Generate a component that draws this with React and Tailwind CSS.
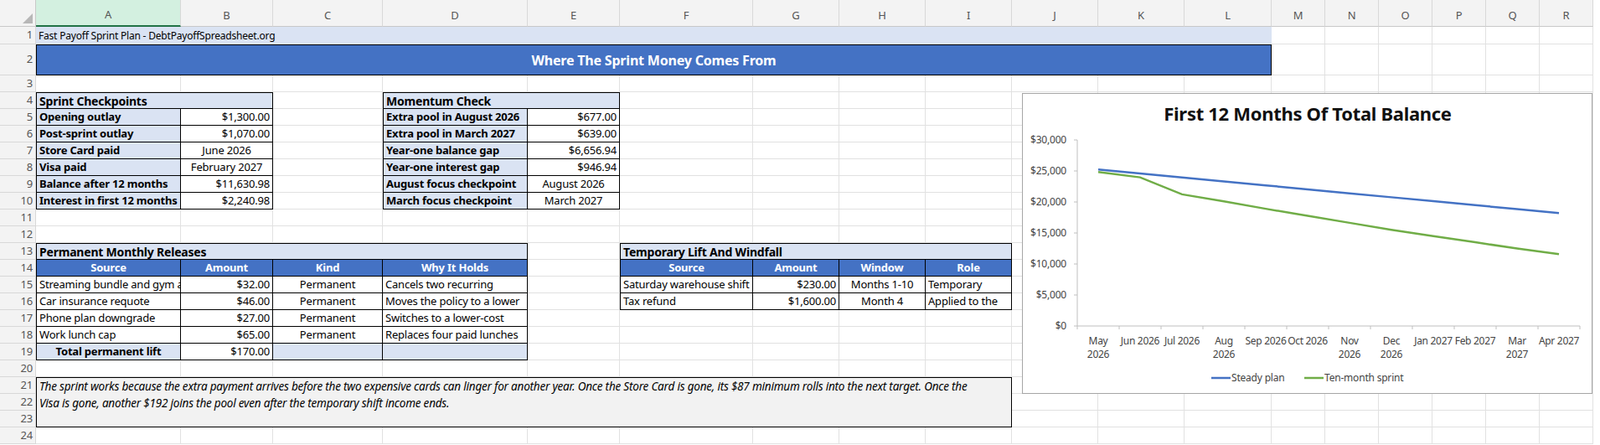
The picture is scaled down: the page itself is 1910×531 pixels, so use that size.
import React from 'react';

const COLS = ['A','B','C','D','E','F','G','H','I','J','K','L','M','N','O','P','Q','R'];
const COLSTART = ['', 'col-start-1','col-start-2','col-start-3','col-start-4','col-start-5','col-start-6','col-start-7','col-start-8','col-start-9','col-start-10','col-start-11','col-start-12','col-start-13','col-start-14','col-start-15','col-start-16','col-start-17','col-start-18','col-start-19','col-start-20'];
const COLSPAN = ['', 'col-span-1','col-span-2','col-span-3','col-span-4','col-span-5','col-span-6','col-span-7','col-span-8','col-span-9','col-span-10','col-span-11','col-span-12','col-span-13'];
const ROWSTART = ['', 'row-start-1','row-start-2','row-start-3','row-start-4','row-start-5','row-start-6','row-start-7','row-start-8','row-start-9','row-start-10','row-start-11','row-start-12','row-start-13','row-start-14','row-start-15','row-start-16','row-start-17','row-start-18','row-start-19','row-start-20','row-start-21','row-start-22','row-start-23','row-start-24','row-start-25','row-start-26'];
const ROWSPAN = ['', 'row-span-1','row-span-2','row-span-3','row-span-4'];

const GRID = 'grid-cols-[43px_173px_110px_131px_173px_110px_159px_103px_103px_103px_103px_103px_104px_64px_64px_64px_64px_64px_64px_64px] grid-rows-[32px_21px_37px_repeat(22,20px)]';

// c = sheet column index (A=1), r = sheet row (1-based)
function Cell({ c, r, span = 1, rspan = 1, className = '', children }) {
  return (
    <div className={`${COLSTART[c + 1]} ${COLSPAN[span]} ${ROWSTART[r + 1]} ${ROWSPAN[rspan]} flex items-center overflow-hidden whitespace-nowrap px-[3px] ${className}`}>
      {children}
    </div>
  );
}

const LB = 'bg-[#dae3f3]';
const HB = 'bg-[#4472c4] text-white font-bold justify-center';
const BR = 'border-r border-b border-black';

function Table({ c, r, title, span, header, rows }) {
  return (
    <>
      <Cell c={c} r={r} span={span} className={`${LB} font-bold text-[14px] border border-black`}>{title}</Cell>
      {header && header.map((h, i) => (
        <Cell key={i} c={c + i} r={r + 1} className={`${HB} ${BR} ${i === 0 ? 'border-l' : ''}`}>{h}</Cell>
      ))}
      {rows.map((row, ri) => row.map((cell, i) => (
        <Cell key={ri + '-' + i} c={c + i} r={r + (header ? 2 : 1) + ri}
          className={`${BR} ${i === 0 ? 'border-l' : ''} ${cell.cls || ''}`}>{cell.t}</Cell>
      )))}
    </>
  );
}

const L = (t) => ({ t, cls: `${LB} font-bold` });
const V = (t) => ({ t, cls: 'justify-end' });
const C = (t) => ({ t, cls: 'justify-center' });
const T = (t) => ({ t });

const blue = [25230, 24590, 23950, 23320, 22680, 22040, 21400, 20760, 20120, 19490, 18850, 18220];
const green = [24830, 23970, 21230, 20100, 18900, 17770, 16640, 15500, 14480, 13500, 12500, 11600];
const xLabels = [['May', '2026'], ['Jun 2026'], ['Jul 2026'], ['Aug', '2026'], ['Sep 2026'], ['Oct 2026'], ['Nov', '2026'], ['Dec', '2026'], ['Jan 2027'], ['Feb 2027'], ['Mar', '2027'], ['Apr 2027']];

function Chart() {
  const x0 = 65, x1 = 665, yTop = 55, yBot = 277;
  const cw = (x1 - x0) / 12;
  const px = (i) => x0 + cw / 2 + cw * i;
  const py = (v) => yBot - (v / 30000) * (yBot - yTop);
  const line = (d) => d.map((v, i) => `${i ? 'L' : 'M'}${px(i)},${py(v)}`).join(' ');
  return (
    <div className="absolute left-[1220px] top-[111px] w-[681px] h-[359px] bg-white border border-[#a6a6a6]">
      <svg width="681" height="359" className="font-['Lato',sans-serif]">
        <text x="340" y="32" textAnchor="middle" fontSize="22" fontWeight="700" fill="#111" letterSpacing="-0.3">First 12 Months Of Total Balance</text>
        {[0, 5000, 10000, 15000, 20000, 25000, 30000].map((v) => (
          <g key={v}>
            <text x="52" y={py(v) + 4} textAnchor="end" fontSize="12" fill="#444">{'$' + v.toLocaleString('en-US')}</text>
            <line x1={x0 - 4} x2={x0} y1={py(v)} y2={py(v)} stroke="#bfbfbf" />
          </g>
        ))}
        <line x1={x0} x2={x0} y1={yTop} y2={yBot} stroke="#bfbfbf" />
        <line x1={x0} x2={x1} y1={yBot} y2={yBot} stroke="#bfbfbf" />
        {Array.from({ length: 13 }).map((_, i) => (
          <line key={i} x1={x0 + cw * i} x2={x0 + cw * i} y1={yBot} y2={yBot + 4} stroke="#bfbfbf" />
        ))}
        {xLabels.map((l, i) => (
          <text key={i} x={px(i)} textAnchor="middle" fontSize="12" fill="#444" letterSpacing="-0.3">
            {l.map((s, j) => <tspan key={j} x={px(i)} y={299 + j * 16}>{s}</tspan>)}
          </text>
        ))}
        <path d={line(blue)} stroke="#4472c4" strokeWidth="2.5" fill="none" />
        <path d={line(green)} stroke="#70ad47" strokeWidth="2.5" fill="none" />
        <line x1="225" x2="248" y1="339" y2="339" stroke="#4472c4" strokeWidth="2.5" />
        <text x="249" y="343" fontSize="12" fill="#444">Steady plan</text>
        <line x1="336" x2="359" y1="339" y2="339" stroke="#70ad47" strokeWidth="2.5" />
        <text x="360" y="343" fontSize="12" fill="#444">Ten-month sprint</text>
      </svg>
    </div>
  );
}

export default function App() {
  return (
    <div className="relative w-[1910px] h-[531px] overflow-hidden bg-white font-['Lato',sans-serif] text-[13px] text-black tracking-[-0.2px]">
      <div className={`grid ${GRID}`}>
        {/* column headers */}
        <div className="col-start-1 row-start-1 bg-[#f3f3f3] border-r border-b border-[#c8c8c8] relative">
          <div className="absolute right-[3px] bottom-[3px] w-0 h-0 border-l-[12px] border-l-transparent border-b-[12px] border-b-[#b7b7b7]" />
        </div>
        {COLS.map((l, i) => (
          <div key={l} className={`${COLSTART[i + 2]} row-start-1 flex items-end justify-center pb-[3px] text-[13px] text-[#555] border-r border-[#d8d8d8] ${i === 0 ? 'bg-[#d3f0e0] border-b-2 border-b-[#217346] text-[#222]' : 'bg-[#f3f3f3] border-b border-b-[#c8c8c8]'}`}>{l}</div>
        ))}
        {/* row headers + gridlines */}
        {Array.from({ length: 24 }).map((_, r) => (
          <React.Fragment key={r}>
            <div className={`col-start-1 ${ROWSTART[r + 2]} flex items-center justify-end pr-[3px] text-[13px] text-[#555] bg-[#f3f3f3] border-r border-b border-[#d8d8d8]`}>{r + 1}</div>
            {COLS.map((l, i) => (
              <div key={l} className={`${COLSTART[i + 2]} ${ROWSTART[r + 2]} border-r border-b border-[#e1e1e1]`} />
            ))}
          </React.Fragment>
        ))}

        <Cell c={1} r={1} span={12} className={`${LB} text-[12px]`}>Fast Payoff Sprint Plan - DebtPayoffSpreadsheet.org</Cell>
        <Cell c={1} r={2} span={12} className="bg-[#4472c4] text-white font-bold text-[16px] justify-center border border-black">Where The Sprint Money Comes From</Cell>

        <Table c={1} r={4} span={2} title="Sprint Checkpoints" rows={[
          [L('Opening outlay'), V('$1,300.00')],
          [L('Post-sprint outlay'), V('$1,070.00')],
          [L('Store Card paid'), C('June 2026')],
          [L('Visa paid'), C('February 2027')],
          [L('Balance after 12 months'), V('$11,630.98')],
          [L('Interest in first 12 months'), V('$2,240.98')],
        ]} />
        <Table c={4} r={4} span={2} title="Momentum Check" rows={[
          [L('Extra pool in August 2026'), V('$677.00')],
          [L('Extra pool in March 2027'), V('$639.00')],
          [L('Year-one balance gap'), V('$6,656.94')],
          [L('Year-one interest gap'), V('$946.94')],
          [L('August focus checkpoint'), C('August 2026')],
          [L('March focus checkpoint'), C('March 2027')],
        ]} />
        <Table c={1} r={13} span={4} title="Permanent Monthly Releases" header={['Source', 'Amount', 'Kind', 'Why It Holds']} rows={[
          [T('Streaming bundle and gym a'), V('$32.00'), C('Permanent'), T('Cancels two recurring')],
          [T('Car insurance requote'), V('$46.00'), C('Permanent'), T('Moves the policy to a lower')],
          [T('Phone plan downgrade'), V('$27.00'), C('Permanent'), T('Switches to a lower-cost')],
          [T('Work lunch cap'), V('$65.00'), C('Permanent'), T('Replaces four paid lunches')],
          [{ t: 'Total permanent lift', cls: `${LB} font-bold justify-center` }, V('$170.00'), { t: '', cls: LB }, { t: '', cls: LB }],
        ]} />
        <Table c={6} r={13} span={4} title="Temporary Lift And Windfall" header={['Source', 'Amount', 'Window', 'Role']} rows={[
          [T('Saturday warehouse shift'), V('$230.00'), C('Months 1-10'), T('Temporary')],
          [T('Tax refund'), V('$1,600.00'), C('Month 4'), T('Applied to the')],
        ]} />

        <div className="col-start-2 col-span-9 row-start-22 row-span-3 bg-[#f2f2f2] border border-black italic px-[3px] leading-[20px] text-[13.5px]">
          <div className="whitespace-nowrap">The sprint works because the extra payment arrives before the two expensive cards can linger for another year. Once the Store Card is gone, its $87 minimum rolls into the next target. Once the</div>
          <div className="whitespace-nowrap">Visa is gone, another $192 joins the pool even after the temporary shift income ends.</div>
        </div>
      </div>
      <Chart />
    </div>
  );
}
